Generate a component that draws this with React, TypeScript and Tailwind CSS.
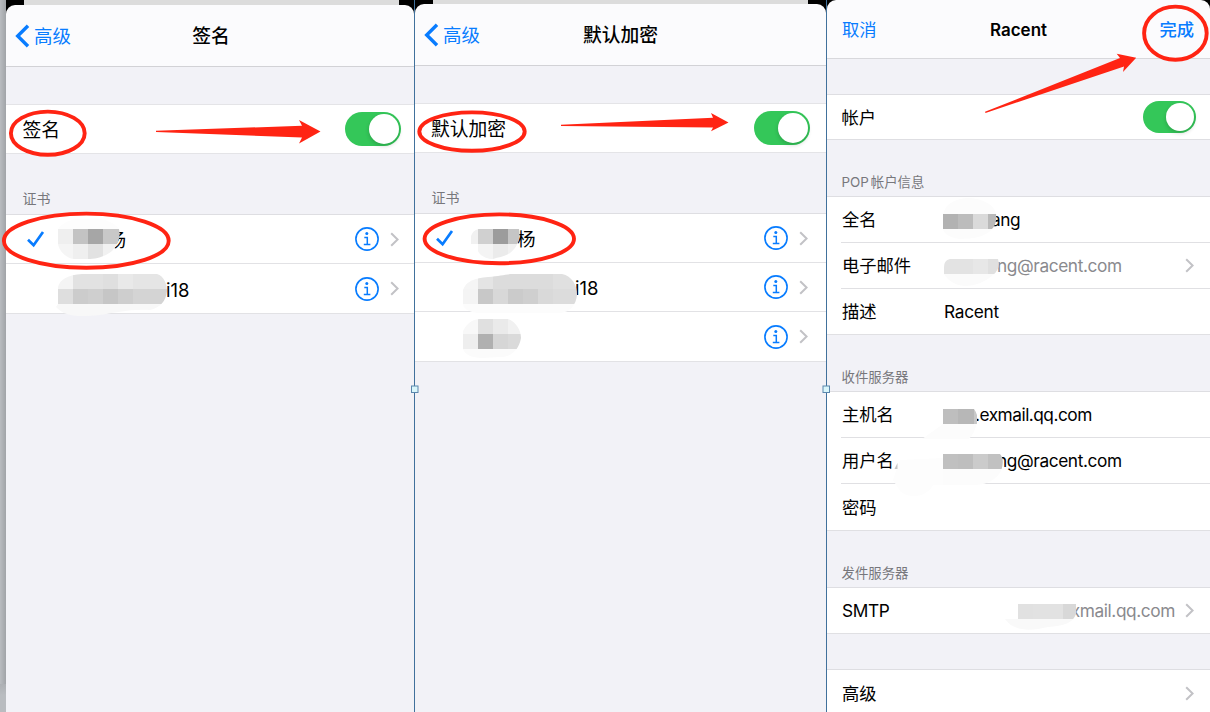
import type { ReactNode } from 'react';
import clsx from 'clsx';

const RED = '#ff2413';

interface CellProps {
  className?: string;
  children?: ReactNode;
}

function Chevron() {
  return (
    <svg width="9" height="15" viewBox="0 0 9 15" fill="none" className="shrink-0">
      <path d="M1.2 1.2 7.6 7.5 1.2 13.8" stroke="#c2c2c6" strokeWidth="2" />
    </svg>
  );
}

function InfoIcon() {
  return (
    <svg width="24" height="24" viewBox="0 0 24 24" fill="none" stroke="#087cff" className="shrink-0">
      <circle cx="12" cy="12" r="11.1" strokeWidth="1.6" />
      <circle cx="11.8" cy="6.6" r="1.5" fill="#087cff" stroke="none" />
      <path d="M9.3 10.4h3V17.3M8.8 17.4h6.6" strokeWidth="1.5" />
    </svg>
  );
}

function Toggle({ small }: { small?: boolean }) {
  return (
    <div
      className={clsx(
        'flex shrink-0 items-center justify-end rounded-full bg-[#34c759] p-[2px]',
        small ? 'h-[32px] w-[53px]' : 'h-[34px] w-[56px]'
      )}
    >
      <div
        className={clsx(
          'rounded-full bg-white shadow-[0_2px_4px_rgba(0,0,0,0.18)]',
          small ? 'size-[28px]' : 'size-[30px]'
        )}
      />
    </div>
  );
}

function CertRow({ className, checked, name, nameClass }: { className?: string; checked?: boolean; name?: string; nameClass?: string }) {
  return (
    <div className={clsx('flex items-center border-b border-[#e2e2e5] pl-5', className)}>
      <div className="w-[20px] shrink-0">
        {checked && (
          <svg width="20" height="18" viewBox="0 0 20 18" fill="none">
            <path d="M2 9.8 7.6 15.2 17 2" stroke="#087cff" strokeWidth="2.7" />
          </svg>
        )}
      </div>
      <span className={clsx('flex-1 pt-[2px] text-[18.5px]', nameClass)}>{name}</span>
      <InfoIcon />
      <div className="ml-[11px] flex">
        <Chevron />
      </div>
    </div>
  );
}

interface CertPanelProps {
  title: string;
  topClass: string;
  titleClass?: string;
  toggleRowClass: string;
  className: string;
  children: ReactNode;
}

function CertPanel({ title, topClass, titleClass, toggleRowClass, className, children }: CertPanelProps) {
  return (
    <div className={clsx('flex h-full shrink-0 flex-col bg-[#f2f2f7] text-[18.8px]', className)}>
      <div className="bg-black">
        <div className={clsx('ml-[18px] w-[375px] bg-[#dcdcdc]', topClass)} />
        <div className="grid h-[62px] grid-cols-[1fr_auto_1fr] items-center rounded-t-[9px] border-b border-[#d2d2d6] bg-[#fbfbfd]">
          <div className="flex items-center gap-[4px] pl-[9px] text-[18.5px] text-[#087cff]">
            <svg width="15" height="24" viewBox="0 0 15 24" fill="none">
              <path d="M13 1.7 2.7 12 13 22.3" stroke="#087cff" strokeWidth="3.4" />
            </svg>
            <span>高级</span>
          </div>
          <span className={clsx('pt-[2px] font-medium', titleClass)}>{title}</span>
        </div>
      </div>
      <div className={clsx('mt-[37px] flex h-[50px] items-center justify-between border-y border-[#e4e4e7] bg-white', toggleRowClass)}>
        <span className="pt-[3px]">{title}</span>
        <Toggle />
      </div>
      <div className="flex h-[60px] items-end pb-[3px] pl-[16.5px] text-[14px] text-[#77777c]">证书</div>
      <div className="border-t border-[#dedee2] bg-white">{children}</div>
    </div>
  );
}

function Group({ className, children }: CellProps) {
  return <div className={clsx('shrink-0 border-t border-[#dedee2] bg-white', className)}>{children}</div>;
}

function GroupLabel({ children }: CellProps) {
  return (
    <div className="flex h-[56px] shrink-0 items-end pb-[4px] pl-[14.5px] text-[13.4px] leading-5 text-[#77777c]">
      {children}
    </div>
  );
}

function Field({ label, value, className, valueClass, last, chevron }: {
  label: string;
  value?: string;
  className: string;
  valueClass?: string;
  last?: boolean;
  chevron?: boolean;
}) {
  return (
    <div className={clsx('border-b border-[#e0e0e3]', !last && 'ml-[14px]', className)}>
      <div className={clsx('flex h-full items-center pr-[16px]', last ? 'pl-[15px]' : 'pl-px')}>
        <span className="w-[102px] shrink-0 whitespace-nowrap pt-px">{label}</span>
        <span className={clsx('flex-1 whitespace-nowrap pt-px', valueClass)}>{value}</span>
        {chevron && <Chevron />}
      </div>
    </div>
  );
}

// x, y, width, height, fill
type Tile = [number, number, number, number, string];

interface Blur {
  id: string;
  shape: string;
  tiles: Tile[];
}

// Pixelated patches hiding personal data, each cut out by a brush-like outline
const blurs: Blur[] = [
  {
    id: 'cert-a1',
    shape: 'M58 229C64 221 74 218 88 219C101 217 114 222 119 229C121 238 117 246 112 251C105 257 95 259 88 259H74C65 258 59 250 58 244Z',
    tiles: [
      [58, 216, 64, 13, '#fdfdfd'],
      [58, 229, 15, 15, '#efefef'], [73, 229, 15, 15, '#c3c3c3'], [88, 229, 15, 15, '#a6a6a6'], [103, 229, 17, 15, '#c8c8c8'],
      [58, 244, 15, 15, '#f5f5f5'], [73, 244, 15, 15, '#efefef'], [88, 244, 15, 15, '#e2e2e2'], [103, 244, 17, 15, '#f1f1f1'],
    ],
  },
  {
    id: 'cert-a2',
    shape: 'M58 287C60 279 68 275 82 274H157C164 276 167 284 167 291C166 301 160 308 150 310C129 309 115 313 100 315C78 317 65 317 56 307L58 304Z',
    tiles: [
      [58, 274, 15, 15, '#f4f4f4'], [73, 274, 30, 15, '#e2e2e2'], [103, 274, 15, 15, '#dfdfdf'], [118, 274, 15, 15, '#e9e9e9'], [133, 274, 35, 15, '#e5e5e5'],
      [58, 289, 15, 15, '#dedede'], [73, 289, 15, 15, '#cccccc'], [88, 289, 15, 15, '#cfcfcf'], [103, 289, 15, 15, '#c6c6c6'], [118, 289, 15, 15, '#cecece'], [133, 289, 35, 15, '#d4d4d4'],
      [54, 304, 114, 15, '#f8f8f8'],
    ],
  },
  {
    id: 'cert-b1',
    shape: 'M471 244V236C473 231 476 229 480 229H519C521 239 517 248 510 253C504 257 499 257 493 259C487 259 480 256 478 251V244Z',
    tiles: [
      [463, 229, 15, 15, '#f1f1f1'], [478, 229, 15, 15, '#d0d0d0'], [493, 229, 15, 15, '#9c9c9c'], [508, 229, 14, 15, '#c5c5c5'],
      [478, 244, 15, 15, '#f4f4f4'], [493, 244, 15, 15, '#ebebeb'], [508, 244, 14, 15, '#f1f1f1'],
    ],
  },
  {
    id: 'cert-b2',
    shape: 'M463 290C466 281 475 278 488 277C501 276 505 274 514 274H562C572 276 577 285 577 295C576 305 570 312 561 313H478C468 312 463 308 463 304Z',
    tiles: [
      [463, 274, 15, 15, '#f5f5f5'], [478, 274, 15, 15, '#e4e4e4'], [493, 274, 60, 15, '#dcdcdc'], [553, 274, 25, 15, '#e0e0e0'],
      [463, 289, 15, 15, '#f4f4f4'], [478, 289, 15, 15, '#c8c8c8'], [493, 289, 15, 15, '#d8d8d8'], [508, 289, 15, 15, '#cbcbcb'], [523, 289, 15, 15, '#cfcfcf'], [538, 289, 15, 15, '#d9d9d9'], [553, 289, 25, 15, '#dcdcdc'],
      [463, 304, 115, 10, '#fcfcfc'],
    ],
  },
  {
    id: 'cert-b3',
    shape: 'M463 331C467 323 473 319 480 319H508C516 322 521 330 521 338C519 350 511 357 500 357L482 358C472 358 464 354 463 349Z',
    tiles: [
      [463, 319, 15, 15, '#f8f8f8'], [478, 319, 15, 15, '#e0e0e0'], [493, 319, 15, 15, '#eaeaea'], [508, 319, 14, 15, '#f1f1f1'],
      [463, 334, 15, 15, '#eeeeee'], [478, 334, 15, 15, '#b0b0b0'], [493, 334, 15, 15, '#d6d6d6'], [508, 334, 14, 15, '#dadada'],
      [463, 349, 58, 10, '#fbfbfb'],
    ],
  },
  {
    id: 'full-name',
    shape: 'M943 214C946 203 956 198 970 198C985 199 995 206 996 214C997 221 995 226 992 229C987 236 974 239 959 239C949 237 944 234 943 229Z',
    tiles: [
      [943, 198, 54, 16, '#fcfcfc'],
      [943, 214, 15, 15, '#b2b2b2'], [958, 214, 15, 15, '#bcbcbc'], [973, 214, 15, 15, '#dadada'], [988, 214, 10, 15, '#b9b9b9'],
      [943, 229, 54, 10, '#fcfcfc'],
    ],
  },
  {
    id: 'email',
    shape: 'M944 268C944 262 946 260 950 259H998C1000 266 998 271 993 275C985 282 975 286 965 286C953 285 947 279 944 274Z',
    tiles: [
      [943, 259, 15, 15, '#e3e3e3'], [958, 259, 15, 15, '#e3e3e3'], [973, 259, 15, 15, '#e7e7e7'], [988, 259, 13, 15, '#e0e0e0'],
      [943, 274, 55, 13, '#fbfbfb'],
    ],
  },
  {
    id: 'host',
    shape: 'M943 409H974C979 416 978 422 976 426C974 433 971 438 968 439H922L943 424Z',
    tiles: [
      [943, 409, 15, 15, '#bebebe'], [958, 409, 16, 15, '#b7b7b7'], [974, 409, 3, 15, '#c8c8c8'],
      [920, 424, 60, 15, '#fcfcfc'],
    ],
  },
  {
    id: 'username',
    shape: 'M943 454H1000C1004 458 1003 465 1001 471C996 480 988 484 976 485H933C929 495 911 501 900 491L893 480L900 460L943 458Z',
    tiles: [
      [893, 454, 50, 48, '#fdfdfd'],
      [943, 454, 15, 15, '#c0c0c0'], [958, 454, 15, 15, '#bebebe'], [973, 454, 15, 15, '#cbcbcb'], [988, 454, 17, 15, '#c1c1c1'],
      [943, 469, 62, 17, '#fcfcfc'],
    ],
  },
  {
    id: 'smtp',
    shape: 'M1018 604H1076V614C1073 623 1064 626 1048 627C1031 631 1014 632 1005 619H1018Z',
    tiles: [
      [1018, 604, 15, 15, '#e1e1e1'], [1033, 604, 30, 15, '#e2e2e2'], [1063, 604, 14, 15, '#d8d8d8'],
      [1004, 619, 73, 13, '#f9f9f9'],
    ],
  },
];

function Markup() {
  return (
    <svg width="1210" height="712" viewBox="0 0 1210 712" className="pointer-events-none absolute inset-0">
      {blurs.map((b) => (
        <g key={b.id}>
          <clipPath id={b.id}>
            <path d={b.shape} />
          </clipPath>
          <g clipPath={`url(#${b.id})`} shapeRendering="crispEdges">
            {b.tiles.map(([x, y, w, h, fill]) => (
              <rect key={`${x}-${y}`} x={x} y={y} width={w} height={h} fill={fill} />
            ))}
          </g>
        </g>
      ))}
      <path d="M894.5 469 897.5 463V469Z" fill="#c4c4c4" />

      <g fill="none" stroke={RED} strokeWidth="3.9">
        <ellipse cx="47.8" cy="133.2" rx="36.9" ry="21.6" />
        <ellipse cx="86.3" cy="240.7" rx="82.4" ry="27.1" />
        <ellipse cx="472" cy="131.6" rx="52.7" ry="19.2" />
        <ellipse cx="499.3" cy="238.8" rx="74.7" ry="24.4" />
        <ellipse cx="1175.4" cy="33.2" rx="31.3" ry="26.6" />
      </g>
      <g fill={RED}>
        <path d="M156 130.8 302 125.7 299 120 320.5 131.5 299 143.5 302 137.5 156 131.9Z" />
        <path d="M561 124.8 713 117.7 711 113 728.5 122.5 711 131.2 713 127.5 561 126Z" />
        <path d="M985 111.8 1120 58 1116.7 53.7 1136.2 57.8 1123 72 1124 66.6 985.5 113Z" />
      </g>

      <g fill="#d9f6fb" stroke="#5b87ad">
        <rect x="411.5" y="386" width="6.5" height="6.5" />
        <rect x="823" y="386" width="6.5" height="6.5" />
      </g>
    </svg>
  );
}

export default function App() {
  return (
    <div className="relative flex h-[712px] w-[1210px] overflow-hidden bg-[#b9bcc0] font-[Inter,'Noto_Sans_CJK_SC',sans-serif] leading-6 text-black">
      <div className="flex w-[6px] shrink-0 flex-col">
        <div className="h-[684px] bg-linear-to-r from-[#b9bcc0] to-[#a1a4a8]" />
        <div className="flex-1 bg-linear-to-b from-[#adb0b4] to-[#b9bcc0] to-40%" />
      </div>

      <CertPanel title="签名" topClass="h-[5px]" titleClass="pl-[2px]" toggleRowClass="pl-[16.5px] pr-[13.5px]" className="w-[408px]">
        <CertRow checked name="杨" className="h-[49px] pr-[15px]" nameClass="pl-[61.5px]" />
        <CertRow name="i18" className="h-[50px] pr-[15px]" nameClass="pl-[120px]" />
      </CertPanel>
      <div className="w-px shrink-0 bg-[#41719c]" />

      <CertPanel title="默认加密" topClass="h-[4px]" toggleRowClass="pl-[16px] pr-[16.5px]" className="w-[411px]">
        <CertRow checked name="杨" className="h-[49px] pr-[18px]" nameClass="pl-[62px]" />
        <CertRow name="i18" className="h-[49px] pr-[18px]" nameClass="pl-[120px]" />
        <CertRow className="h-[50px] pr-[18px]" />
      </CertPanel>
      <div className="w-px shrink-0 bg-[#41719c]" />

      <div className="flex w-[383px] shrink-0 flex-col bg-[#f2f2f7] text-[17.3px]">
        <div className="bg-black">
          <div className="grid h-[59px] grid-cols-3 items-center rounded-t-[9px] border-b border-[#d8d8dc] bg-[#fbfbfd] px-[16px] text-[#087cff]">
            <span className="-ml-px pt-px">取消</span>
            <span className="pt-px text-center text-[17px] font-semibold text-black">Racent</span>
            <span className="pt-px text-right font-medium">完成</span>
          </div>
        </div>
        <div className="mt-[35px] flex h-[46px] shrink-0 items-center justify-between border-y border-[#dedee2] bg-white pl-[14.5px] pr-[14px]">
          <span className="pt-px">帐户</span>
          <Toggle small />
        </div>

        <GroupLabel>
          <span className="mr-[2px]">POP</span>帐户信息
        </GroupLabel>
        <Group>
          <Field label="全名" value="ang" className="h-[46px]" valueClass="pl-[47px] tracking-[-0.5px]" />
          <Field label="电子邮件" value="ng@racent.com" className="h-[46px]" valueClass="pl-[53px] tracking-[-0.4px] text-[#8a8a8e]" chevron />
          <Field label="描述" value="Racent" className="h-[46px]" valueClass="tracking-[-0.3px]" last />
        </Group>

        <GroupLabel>收件服务器</GroupLabel>
        <Group>
          <Field label="主机名" value=".exmail.qq.com" className="h-[46px]" valueClass="pl-[31px] tracking-[-0.5px]" />
          <Field label="用户名" value="ng@racent.com" className="h-[46px]" valueClass="pl-[53px] tracking-[-0.4px]" />
          <Field label="密码" className="h-[47px]" last />
        </Group>

        <GroupLabel>发件服务器</GroupLabel>
        <Group>
          <Field label="SMTP" value="xmail.qq.com" className="h-[46px] tracking-[-0.4px]" valueClass="pr-[10px] text-right text-[#8a8a8e]" last chevron />
        </Group>

        <Group className="mt-[35px]">
          <Field label="高级" className="h-[47px]" last chevron />
        </Group>
      </div>

      <Markup />
    </div>
  );
}
